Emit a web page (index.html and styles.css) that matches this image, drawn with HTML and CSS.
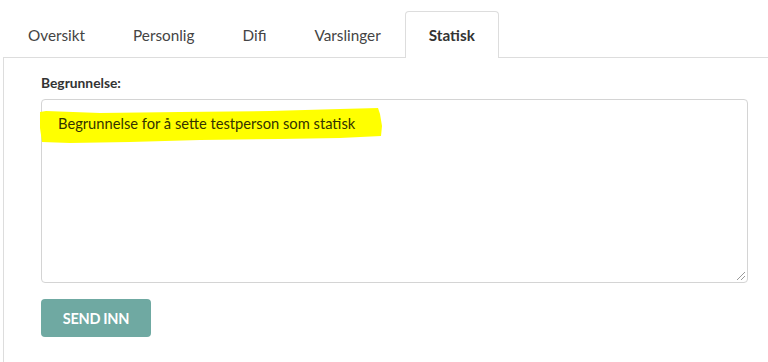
FILE: index.html
```html
<!DOCTYPE html>
<html lang="no">
<head>
    <meta charset="UTF-8">
    <meta name="viewport" content="width=device-width, initial-scale=1.0">
    <title>Statisk</title>
    <link rel="stylesheet" href="styles.css">
</head>
<body>
    <nav class="tabs">
        <a class="tab">Oversikt</a>
        <a class="tab">Personlig</a>
        <a class="tab">Difi</a>
        <a class="tab">Varslinger</a>
        <a class="tab active">Statisk</a>
    </nav>

    <section class="panel">
        <label class="field-label">Begrunnelse:</label>
        <div class="textarea">
            <svg class="marker" width="344" height="36" viewBox="0 0 344 36">
                <path d="M0 4 L6 3 L60 5 L140 4 L230 3 L300 1 L338 0 L340 6 L342 18 L341 28 L300 30 L240 31 L160 32 L90 34 L30 35 L2 34 L0 20 Z" fill="#ffff00"></path>
            </svg>
            <span class="value">Begrunnelse for å sette testperson som statisk</span>
            <svg class="grip" width="10" height="10" viewBox="0 0 10 10" stroke="#999" stroke-width="1">
                <line x1="1" y1="9" x2="9" y2="1"></line>
                <line x1="5" y1="9" x2="9" y2="5"></line>
            </svg>
        </div>
        <button class="submit">SEND INN</button>
    </section>
</body>
</html>
```

FILE: styles.css
```css
* {
    margin: 0;
    padding: 0;
    box-sizing: border-box;
    font-family: 'Lato', 'Liberation Sans', sans-serif;
}

body {
    background-color: #ffffff;
    color: #333333;
    overflow: hidden;
}

.tabs {
    display: flex;
    margin-top: 11px;
    margin-left: 3px;
    padding-left: 1px;
    border-bottom: 1px solid #dddddd;
}

.tab {
    display: block;
    height: 46px;
    padding: 0 23px;
    line-height: 46px;
    font-size: 15.3px;
    color: #444444;
    border: 1px solid transparent;
    border-bottom: none;
    border-radius: 4px 4px 0 0;
    margin-bottom: -1px;
}

.tab.active {
    background-color: #ffffff;
    border-color: #dddddd;
    height: 47px;
    font-weight: 700;
    color: #333333;
}

.panel {
    margin-left: 3px;
    border-left: 1px solid #dddddd;
    padding: 16px 0 40px 37px;
    height: 320px;
}

.field-label {
    display: block;
    font-size: 13.8px;
    font-weight: 700;
    color: #333333;
    margin-bottom: 8px;
}

.textarea {
    position: relative;
    width: 707px;
    height: 184px;
    border: 1px solid #d4d4d4;
    border-radius: 4px;
    padding: 14px 16px;
    font-size: 14.7px;
    color: #333300;
}

.marker {
    position: absolute;
    left: -2px;
    top: 8px;
}

.value {
    position: relative;
}

.grip {
    position: absolute;
    right: 1px;
    bottom: 1px;
}

.submit {
    margin-top: 16px;
    width: 110px;
    height: 38px;
    border: none;
    border-radius: 4px;
    background-color: #6fa9a2;
    color: #ffffff;
    font-size: 14.5px;
    font-weight: 700;
    letter-spacing: -0.3px;
}
```
